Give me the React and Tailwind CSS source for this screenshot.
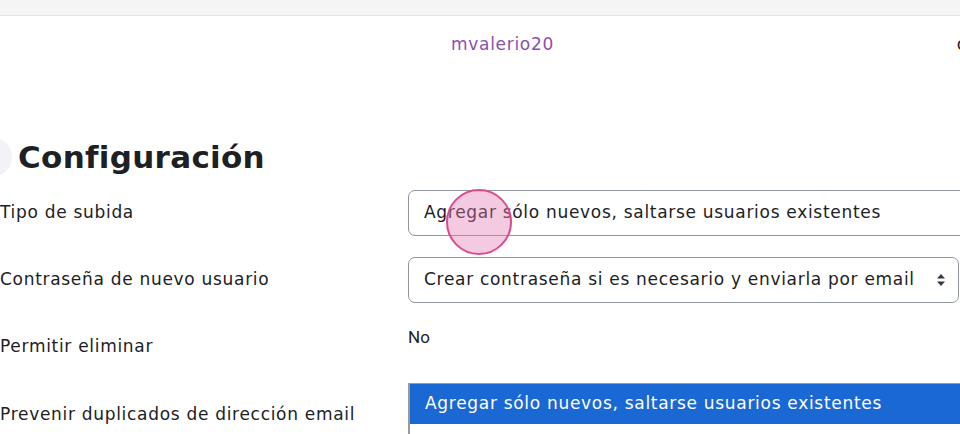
const labelCls = "text-[17px] tracking-[0.7px] text-[#1d2125]";

function SelectBox({ text, arrows }) {
  return (
    <div className="flex h-[46px] items-center justify-between rounded-[7px] border border-[#8f959e] bg-white pl-[15px] pr-[12px] text-[17px] tracking-[0.7px] text-[#1d2125]">
      <span className="whitespace-nowrap">{text}</span>
      {arrows && (
        <svg width="10" height="14" viewBox="0 0 10 14" className="shrink-0">
          <path d="M5 1 L9 5.5 H1 Z" fill="#343a40" />
          <path d="M5 13 L9 8.5 H1 Z" fill="#343a40" />
        </svg>
      )}
    </div>
  );
}

export default function App() {
  return (
    <div className="relative h-[434px] w-[960px] overflow-hidden bg-white font-['DejaVu_Sans',sans-serif]">
      {/* Top bar */}
      <div className="h-[16px] border-b border-[#e3e3e3] bg-[#f5f5f5]" />

      {/* User row */}
      <div className="flex h-[58px] items-center">
        <span className="ml-[451px] text-[17px] tracking-[0.7px] text-[#8a4fb0]">mvalerio20</span>
        <span className="flex-1" />
        <span className="mr-[-6px] text-[17px] text-[#1d2125]">c</span>
      </div>

      {/* Heading */}
      <div className="mt-[63px] flex items-center">
        <div className="ml-[-28px] h-[40px] w-[40px] shrink-0 rounded-full bg-[#f3f3f7]" />
        <h1 className="ml-[6px] text-[31px] font-bold leading-[40px] tracking-[0.3px] text-[#1d2125]">Configuración</h1>
      </div>

      {/* Form rows */}
      <div className="mt-[13px] grid grid-cols-[408px_600px]">
        <div className={`${labelCls} pt-[10px]`}>Tipo de subida</div>
        <SelectBox text="Agregar sólo nuevos, saltarse usuarios existentes" />

        <div className={`${labelCls} mt-[21px] pt-[10px]`}>Contraseña de nuevo usuario</div>
        <div className="mt-[21px] w-[551px]">
          <SelectBox text="Crear contraseña si es necesario y enviarla por email" arrows />
        </div>

        <div className={`${labelCls} mt-[31px]`}>Permitir eliminar</div>
        <div className="mt-[22px] font-['Roboto',sans-serif] text-[17px] text-[#1d2125]">No</div>

        <div className={`${labelCls} mt-[42px]`}>Prevenir duplicados de dirección email</div>
        <div />
      </div>

      {/* Open dropdown list */}
      <div className="absolute left-[408px] top-[383px] h-[60px] w-[560px] border-l-2 border-t border-[#9a9a9a] bg-white">
        <div className="flex h-[40px] items-center bg-[#1a68d4] pl-[15px] text-[17px] tracking-[0.7px] text-white">
          Agregar sólo nuevos, saltarse usuarios existentes
        </div>
      </div>

      {/* Touch indicator */}
      <div className="absolute left-[446px] top-[189px] h-[66px] w-[66px] rounded-full border-2 border-[#d94b91] bg-[#e07bb0]/40" />
    </div>
  );
}
